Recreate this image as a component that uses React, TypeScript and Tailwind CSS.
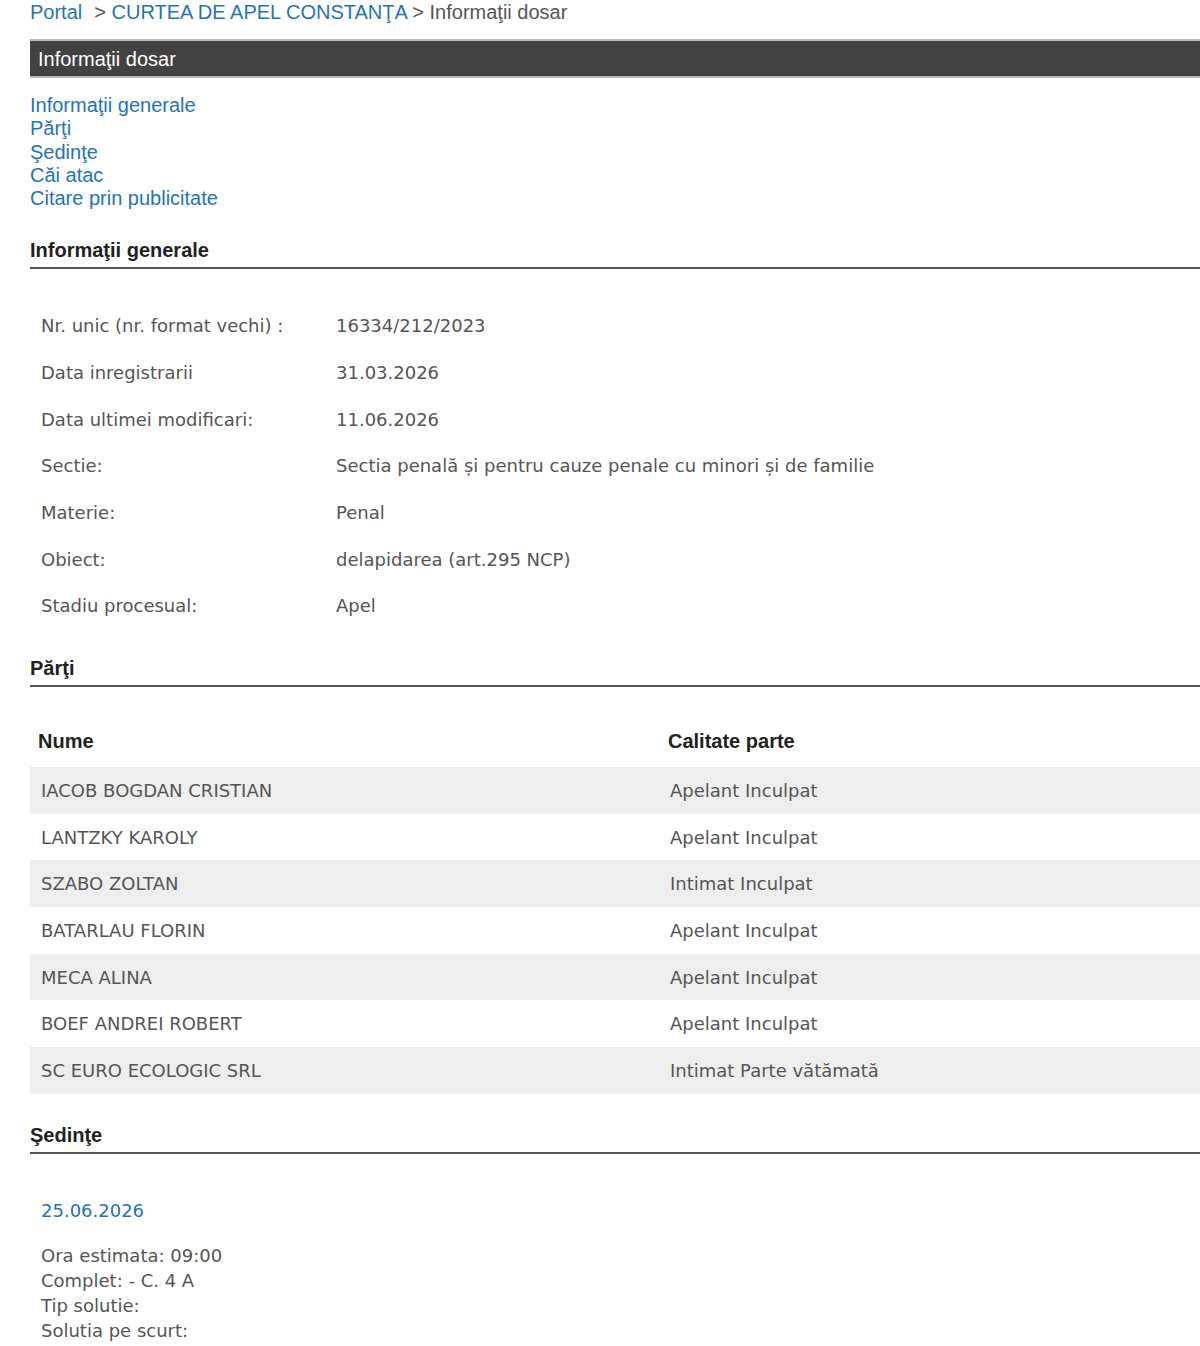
import React from 'react';

const info: [string, string][] = [
  ['Nr. unic (nr. format vechi) :', '16334/212/2023'],
  ['Data inregistrarii', '31.03.2026'],
  ['Data ultimei modificari:', '11.06.2026'],
  ['Sectie:', 'Sectia penală și pentru cauze penale cu minori și de familie'],
  ['Materie:', 'Penal'],
  ['Obiect:', 'delapidarea (art.295 NCP)'],
  ['Stadiu procesual:', 'Apel'],
];

const parti: [string, string][] = [
  ['IACOB BOGDAN CRISTIAN', 'Apelant Inculpat'],
  ['LANTZKY KAROLY', 'Apelant Inculpat'],
  ['SZABO ZOLTAN', 'Intimat Inculpat'],
  ['BATARLAU FLORIN', 'Apelant Inculpat'],
  ['MECA ALINA', 'Apelant Inculpat'],
  ['BOEF ANDREI ROBERT', 'Apelant Inculpat'],
  ['SC EURO ECOLOGIC SRL', 'Intimat Parte vătămată'],
];

const arial = "font-['Liberation_Sans',Arial,sans-serif]";
const body = "font-['DejaVu_Sans',Verdana,sans-serif]";

function SectionTitle({ children }: { children: React.ReactNode }) {
  return (
    <div className={`${arial} font-bold text-[20px] leading-[24px] text-[#222] border-b-2 border-[#555] pb-[5px]`}>
      {children}
    </div>
  );
}

export default function App() {
  return (
    <div className="w-[1200px] overflow-hidden bg-white min-h-[1346px]">
      <div className="ml-[30px] w-[1220px]">
        {/* breadcrumb */}
        <div className={`${arial} text-[20px] leading-[24px] text-[#555]`}>
          <span className="text-[#1f74b8]">Portal</span>
          <span className="ml-[12px]">&gt; </span>
          <span className="text-[#1f74b8]">CURTEA DE APEL CONSTANŢA</span>
          <span> &gt; Informaţii dosar</span>
        </div>

        <div className="mt-[15px] h-[39px] bg-[#424242] border-y-2 border-[#bbb] flex items-center pl-[8px]">
          <span className={`${arial} text-[20px] text-white`}>Informaţii dosar</span>
        </div>

        <div className={`${arial} mt-[16px] text-[20px] leading-[23.3px] text-[#1f74b8] flex flex-col`}>
          <span>Informaţii generale</span>
          <span>Părţi</span>
          <span>Şedinţe</span>
          <span>Căi atac</span>
          <span>Citare prin publicitate</span>
        </div>

        <div className="mt-[28px]">
          <SectionTitle>Informaţii generale</SectionTitle>
        </div>

        <div className={`${body} mt-[33px] text-[18px] text-[#555]`}>
          {info.map(([k, v]) => (
            <div key={k} className="flex h-[46.67px] items-center">
              <span className="w-[306px] pl-[11px]">{k}</span>
              <span>{v}</span>
            </div>
          ))}
        </div>

        <div className="mt-[27px]">
          <SectionTitle>Părţi</SectionTitle>
        </div>

        <div className="mt-[27px]">
          <div className={`${arial} font-bold text-[20px] text-[#222] flex h-[53px] items-center`}>
            <span className="w-[630px] pl-[8px]">Nume</span>
            <span className="pl-[8px]">Calitate parte</span>
          </div>
          <div className={`${body} text-[18px] text-[#555]`}>
            {parti.map(([n, c], i) => (
              <div key={n} className={`flex h-[46.67px] items-center ${i % 2 === 0 ? 'bg-[#eeeeee]' : ''}`}>
                <span className="w-[630px] pl-[11px]">{n}</span>
                <span className="pl-[10px]">{c}</span>
              </div>
            ))}
          </div>
        </div>

        <div className="mt-[29px]">
          <SectionTitle>Şedinţe</SectionTitle>
        </div>

        <div className={`${body} pl-[11px] text-[18px]`}>
          <div className="mt-[43px] text-[#1f74b8]">25.06.2026</div>
          <div className="mt-[19px] text-[#555] leading-[25px]">
            <div>Ora estimata: 09:00</div>
            <div>Complet: - C. 4 A</div>
            <div>Tip solutie:</div>
            <div>Solutia pe scurt:</div>
          </div>
        </div>
      </div>
    </div>
  );
}
